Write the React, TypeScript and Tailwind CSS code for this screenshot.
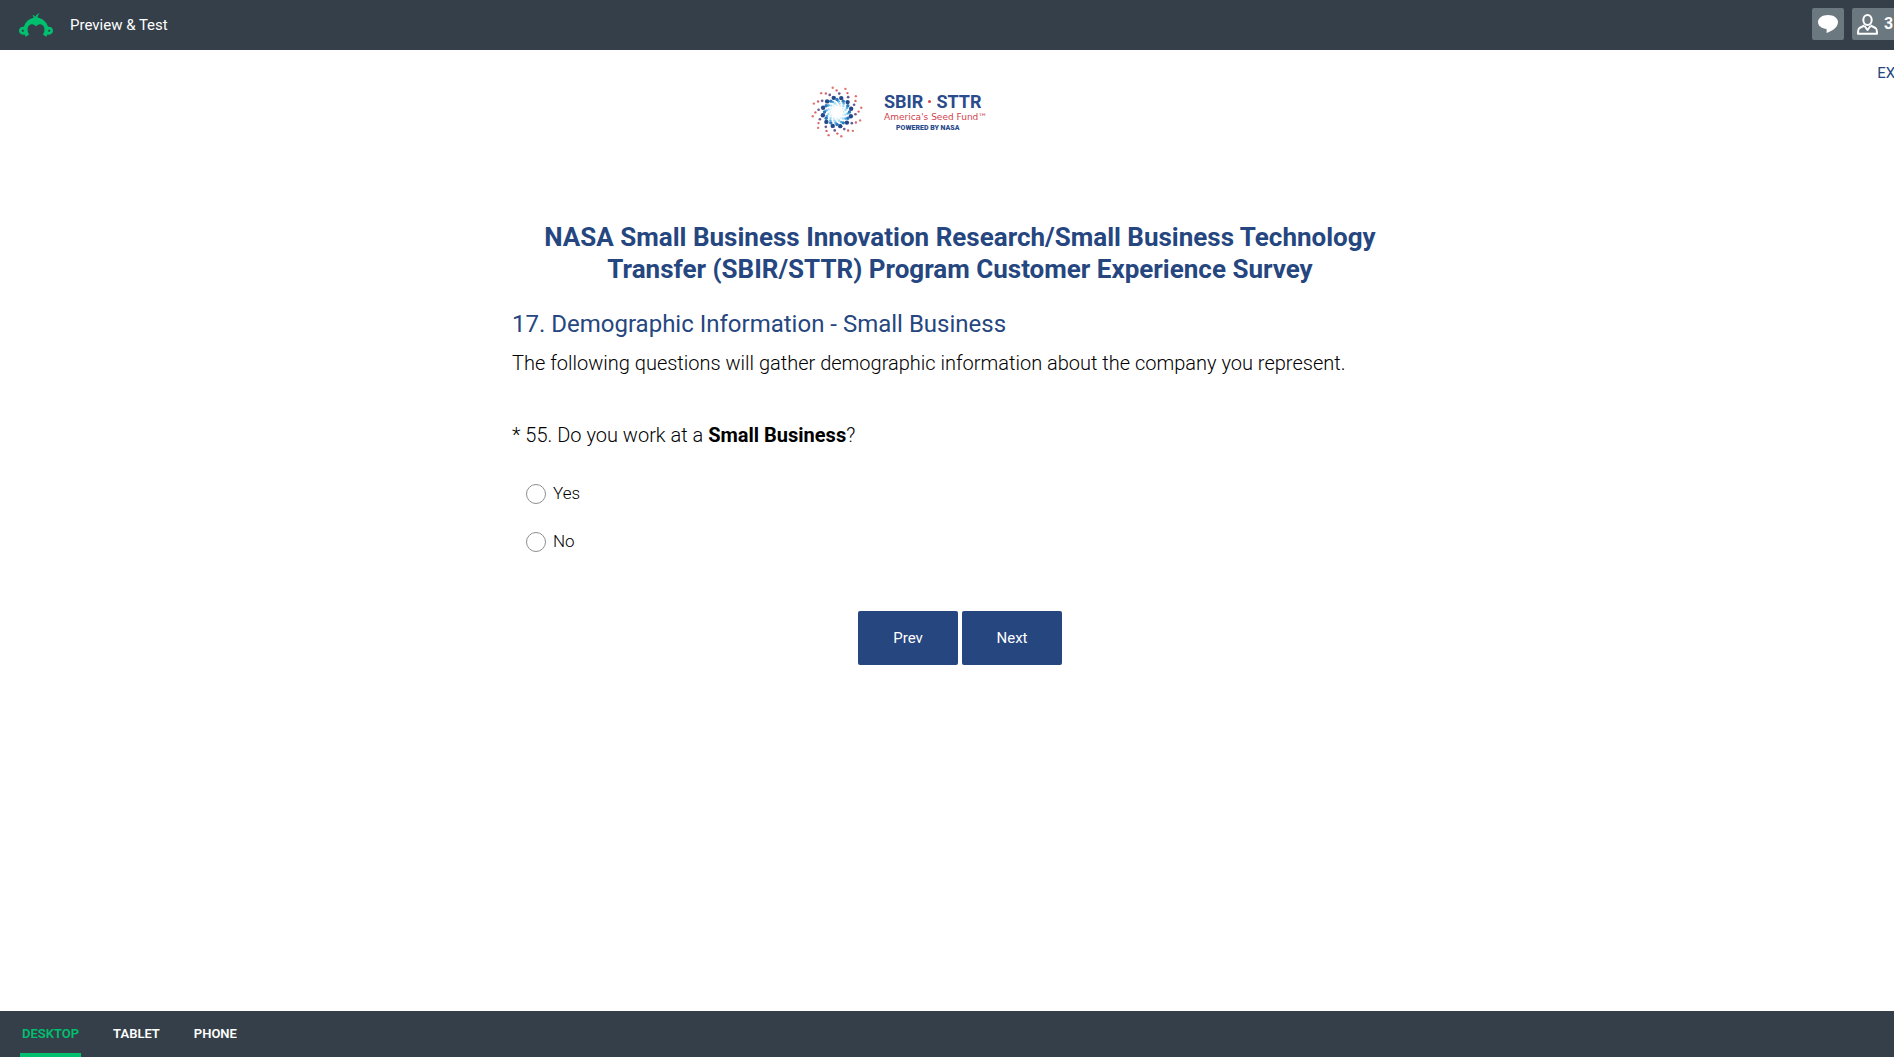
import { useState } from 'react';
import { SiSurveymonkey } from 'react-icons/si';

const DEVICES = ['DESKTOP', 'TABLET', 'PHONE'];
const ANSWERS = ['Yes', 'No'];

// one arm of the burst, from the centre outwards
const ARM_DOTS = [
  { r: 20, angle: 42, size: 3, fill: '#d5effa' },
  { r: 26, angle: 30, size: 3.5, fill: '#a5daf4' },
  { r: 32, angle: 21, size: 4, fill: '#5cb4e2' },
  { r: 37, angle: 13, size: 5, fill: '#2b7bbd' },
  { r: 43, angle: 0, size: 6.5, fill: '#26488a' },
  { r: 55, angle: -10, size: 4, fill: '#6b5a94' },
  { r: 64, angle: -18, size: 3.5, fill: '#d9636c' },
  { r: 73, angle: -27, size: 3.5, fill: '#e0736e' },
];

function Burst() {
  const dots = [];
  for (let arm = 0; arm < 12; arm++) {
    for (const dot of ARM_DOTS) {
      const a = ((arm * 30 - 73 + dot.angle) * Math.PI) / 180;
      dots.push(
        <circle
          key={`${arm}-${dot.r}`}
          cx={80 + dot.r * Math.cos(a)}
          cy={80 + dot.r * Math.sin(a)}
          r={dot.size}
          fill={dot.fill}
        />
      );
    }
  }
  return (
    <svg className="size-[54px]" viewBox="0 0 160 160" aria-hidden="true">
      {dots}
    </svg>
  );
}

function Logo() {
  return (
    <div className="flex w-[300px] items-center gap-5">
      <Burst />
      <div className="flex flex-col">
        <span className="flex items-center gap-[5px] text-[18px] leading-5 font-bold text-[#2a4b8c]">
          SBIR
          <span className="size-[3px] rounded-full bg-[#d8404f]" />
          STTR
        </span>
        <span className="font-['DejaVu_Sans'] text-[9px] leading-[11px] text-[#d23f4d]">America's Seed Fund™</span>
        <span className="pl-3 text-[7px] leading-[10px] font-black text-[#2a4b8c]">POWERED BY NASA</span>
      </div>
    </div>
  );
}

function TopBar() {
  return (
    <header className="flex h-[50px] items-center bg-[#353f49] pr-2 pl-[19px] text-white">
      <SiSurveymonkey className="size-[34px] text-[#00bf6f]" aria-hidden="true" />
      <span className="ml-[17px] text-[15px]">Preview &amp; Test</span>
      <div className="ml-auto flex gap-2 self-start pt-2">
        <button
          type="button"
          aria-label="Comments"
          className="flex size-8 cursor-pointer items-center justify-center rounded-xs bg-[#6b787f]"
        >
          <svg className="h-5 w-5" viewBox="0 0 20 20" fill="currentColor" aria-hidden="true">
            <path d="M10 1C4.500 1 0 3.800 0 8c0 4.100 4 6.600 8.600 6.900V19c5-1.800 11.400-5.200 11.400-11C20 3.800 15.500 1 10 1z" />
          </svg>
        </button>
        <button
          type="button"
          className="flex h-8 w-[60px] cursor-pointer items-center gap-1.5 rounded-xs bg-[#6b787f] pl-[5px] text-base font-bold"
        >
          <svg
            className="h-[21px] w-[21px] shrink-0"
            viewBox="0 0 21 21"
            fill="none"
            stroke="currentColor"
            strokeWidth={2}
            strokeLinejoin="round"
            aria-hidden="true"
          >
            <ellipse cx="10.500" cy="6" rx="4.200" ry="5" />
            <path d="M7.500 11.500 2.500 14C1.300 14.700 1 16 1 19.800h19c0-3.800-.3-5.100-1.500-5.800l-5-2.500" />
            <path d="m7.500 12 3 4 3-4" />
          </svg>
          3
        </button>
      </div>
    </header>
  );
}

function DeviceTabs() {
  const [device, setDevice] = useState('DESKTOP');

  return (
    <footer className="flex h-[46px] gap-[30px] bg-[#353f49] pl-5">
      {DEVICES.map((name) => (
        <button
          type="button"
          key={name}
          onClick={() => setDevice(name)}
          className={`cursor-pointer border-b-4 px-0.5 pt-1 text-[13px] font-semibold ${
            device === name ? 'border-[#00bf6f] text-[#00bf6f]' : 'border-transparent text-white'
          }`}
        >
          {name}
        </button>
      ))}
    </footer>
  );
}

export default function App() {
  const [answer, setAnswer] = useState('');

  return (
    <div className="overflow-x-hidden bg-white font-['Roboto',sans-serif]">
      <div className="flex min-h-screen w-[calc(100%+26px)] flex-col">
        <TopBar />
        <div className="flex h-[35px] items-end justify-end pr-3">
          <a href="#exit" className="text-[15px] leading-6 text-[#25467f]">
            EXIT
          </a>
        </div>

        <main className="mx-auto w-full max-w-[896px] flex-1">
          <div className="flex justify-center">
            <Logo />
          </div>

          <h1 className="mt-[82px] px-4 text-center text-[26px] leading-8 font-bold text-[#25467f]">
            NASA Small Business Innovation Research/Small Business Technology Transfer (SBIR/STTR) Program
            Customer Experience Survey
          </h1>
          <h2 className="mt-[23px] text-[24px] leading-8 text-[#25467f]">
            17. Demographic Information - Small Business
          </h2>
          <p className="mt-[9px] text-[20px] leading-7 font-light text-black">
            The following questions will gather demographic information about the company you represent.
          </p>

          <form className="mt-11" onSubmit={(e) => e.preventDefault()}>
            <fieldset>
              <legend className="text-[20px] leading-7 font-light text-black">
                * 55. Do you work at a <strong className="font-bold">Small Business</strong>?
              </legend>
              <div className="mt-[31px] flex flex-col gap-5 pl-[14px]">
                {ANSWERS.map((label) => (
                  <label
                    key={label}
                    className="flex h-7 cursor-pointer items-center gap-[7px] text-[17px] font-light text-black"
                  >
                    <input
                      type="radio"
                      name="small-business"
                      checked={answer === label}
                      onChange={() => setAnswer(label)}
                      className="size-5 appearance-none rounded-full border border-[#8f8f8f] checked:border-[6px] checked:border-[#25467f]"
                    />
                    {label}
                  </label>
                ))}
              </div>
            </fieldset>
            <div className="mt-[55px] flex justify-center gap-1">
              <button
                type="button"
                className="h-[54px] w-[100px] cursor-pointer rounded-xs bg-[#25467f] text-[15px] text-white"
              >
                Prev
              </button>
              <button
                type="submit"
                className="h-[54px] w-[100px] cursor-pointer rounded-xs bg-[#25467f] text-[15px] text-white"
              >
                Next
              </button>
            </div>
          </form>
        </main>

        <DeviceTabs />
      </div>
    </div>
  );
}
